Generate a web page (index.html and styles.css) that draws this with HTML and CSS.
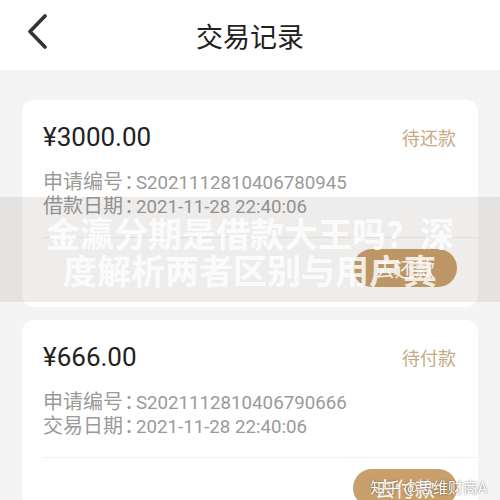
FILE: index.html
```html
<!DOCTYPE html>
<html lang="zh-CN">
<head>
    <meta charset="UTF-8">
    <title>交易记录</title>
    <link rel="stylesheet" href="styles.css">
</head>
<body>
    <div class="header">
        <svg class="back" width="24" height="36" viewBox="0 0 24 36">
            <path d="M19 2 L4 17.5 L19 33" fill="none" stroke="#333" stroke-width="3.6" stroke-linecap="round" stroke-linejoin="round"/>
        </svg>
        <h1>交易记录</h1>
    </div>

    <div class="list">
        <div class="card">
            <div class="card-top">
                <span class="amount">¥3000.00</span>
                <span class="status">待还款</span>
            </div>
            <div class="info"><span class="label">申请编号<span class="colon">：</span></span>S2021112810406780945</div>
            <div class="info"><span class="label">借款日期<span class="colon">：</span></span>2021-11-28 22:40:06</div>
            <div class="divider"></div>
            <div class="actions">
                <button class="pay-btn">去还款</button>
            </div>
        </div>

        <div class="card">
            <div class="card-top">
                <span class="amount">¥666.00</span>
                <span class="status">待付款</span>
            </div>
            <div class="info"><span class="label">申请编号<span class="colon">：</span></span>S2021112810406790666</div>
            <div class="info"><span class="label">交易日期<span class="colon">：</span></span>2021-11-28 22:40:06</div>
            <div class="divider"></div>
            <div class="actions">
                <button class="pay-btn">去付款</button>
            </div>
        </div>
    </div>

    <!-- 文章标题水印 -->
    <div class="banner">
        <div>金瀛分期是借款大王吗？深</div>
        <div>度解析两者区别与用户真</div>
    </div>
    <div class="mark">知乎 @思维财商A</div>
</body>
</html>
```

FILE: styles.css
```css
html {
    overflow: hidden;
}

body {
    margin: 0;
    font-family: Roboto, "Noto Sans CJK SC", sans-serif;
    background-color: #f4f4f4;
    height: 500px;
    overflow: hidden;
    position: relative;
}

.header {
    height: 70px;
    background-color: white;
    display: flex;
    align-items: center;
    justify-content: center;
    position: relative;
}

.back {
    position: absolute;
    left: 26px;
    top: 14px;
}

h1 {
    margin: 0;
    font-family: "Noto Sans CJK SC", sans-serif;
    font-size: 27px;
    font-weight: 400;
    color: #222;
}

.list {
    padding: 30px 22px 0;
    display: flex;
    flex-direction: column;
    gap: 13px;
}

.card {
    background-color: white;
    border-radius: 12px;
    padding: 22px 0 20px 21px;
}

.card-top {
    display: flex;
    justify-content: space-between;
    align-items: center;
    height: 30px;
    margin-bottom: 17px;
    padding-right: 22px;
}

.amount {
    font-size: 26px;
    color: #222;
}

.status {
    font-family: "Noto Sans CJK SC", sans-serif;
    font-size: 18px;
    color: #c6aa85;
}

.info {
    font-size: 18.7px;
    line-height: 24px;
    height: 24px;
    color: #9a9a9a;
    white-space: nowrap;
}

.label {
    font-family: "Noto Sans CJK SC", sans-serif;
    font-size: 20px;
}

.colon {
    margin-left: 1px;
    letter-spacing: -8px;
}

.divider {
    margin-top: 20px;
    border-top: 1px solid #f0f0f0;
}

.actions {
    display: flex;
    justify-content: flex-end;
    padding: 11px 21px 0 0;
}

.pay-btn {
    width: 104px;
    height: 38px;
    padding: 0;
    border: none;
    border-radius: 19px;
    background-color: #c9a06b;
    color: white;
    font-family: "Noto Sans CJK SC", sans-serif;
    font-size: 20px;
}

.banner {
    position: absolute;
    left: 0;
    right: 0;
    top: 197px;
    height: 105px;
    padding-top: 17px;
    box-sizing: border-box;
    background-color: rgba(70, 50, 40, 0.09);
    text-align: center;
    font-family: "Noto Sans CJK SC", sans-serif;
    font-size: 34px;
    font-weight: 700;
    line-height: 37px;
    color: rgba(255, 255, 255, 0.82);
}

.mark {
    position: absolute;
    right: 13px;
    bottom: 3px;
    font-family: "Noto Sans CJK SC", sans-serif;
    font-size: 15px;
    color: white;
    text-shadow: 0 0 2px rgba(0, 0, 0, 0.6);
}
```
